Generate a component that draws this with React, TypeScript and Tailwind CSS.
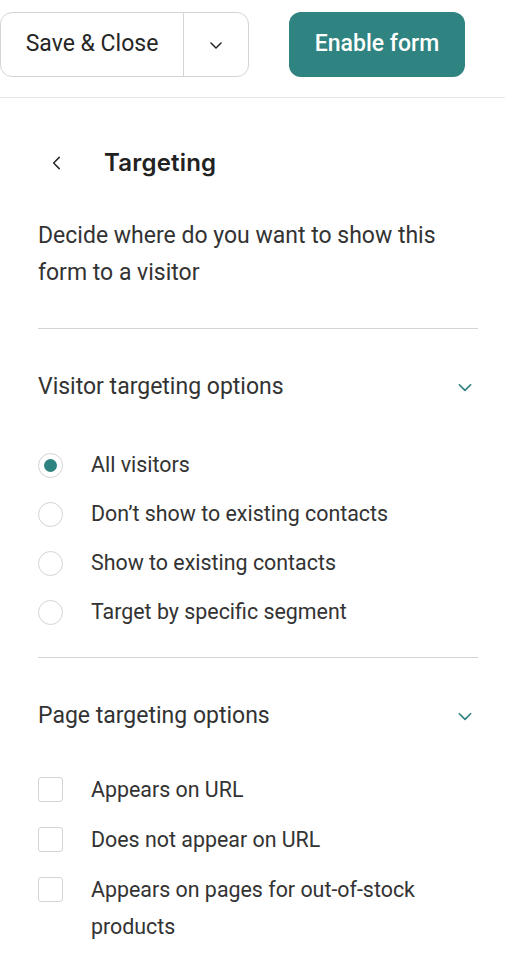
import React from "react";

const Chevron = ({ className = "", dir = "down", sw = 1.5 }: { className?: string; dir?: "down" | "left"; sw?: number }) => (
  <svg
    viewBox="0 0 16 16"
    className={className}
    fill="none"
    stroke="currentColor"
    strokeWidth={sw}
    strokeLinecap="round"
    strokeLinejoin="round"
  >
    {dir === "down" ? <path d="M3 6l5 5 5-5" /> : <path d="M10 3L5 8l5 5" />}
  </svg>
);

export default function App() {
  const radios = [
    "All visitors",
    "Don\u2019t show to existing contacts",
    "Show to existing contacts",
    "Target by specific segment",
  ];
  const checks = ["Appears on URL", "Does not appear on URL", "Appears on pages for out-of-stock products"];
  return (
    <div className="w-[505px] min-h-[969px] bg-white text-[#333333]" style={{ fontFamily: "Roboto, 'Liberation Sans', sans-serif" }}>
      <div className="flex items-center gap-10 pt-3 pb-5 border-b border-[#e6e6e6]">
        <div className="flex h-[65px] w-[249px] rounded-[12px] border border-[#d4d4d4]">
          <div className="flex w-[183px] items-center justify-center border-r border-[#d4d4d4] text-[23px] text-[#262626]">Save &amp; Close</div>
          <div className="flex flex-1 items-center justify-center">
            <Chevron className="w-[16px] h-[16px] text-[#262626]" />
          </div>
        </div>
        <div className="flex h-[65px] w-[176px] items-center justify-center rounded-[12px] bg-[#2f8380] text-[23px] font-medium text-white">
          Enable form
        </div>
      </div>

      <div className="pl-[38px] pr-[27px]">
        <div className="flex items-center h-[40px] mt-[45px]">
          <Chevron dir="left" sw={1.3} className="ml-[10px] w-[18px] h-[18px] text-[#262626]" />
          <span className="ml-[38px] text-[24px] font-semibold tracking-[0.2px] text-[#222222]" style={{ fontFamily: "Inter, sans-serif" }}>Targeting</span>
        </div>
        <p className="mt-[34px] text-[23px] leading-[37px] pr-[20px]">
          Decide where do you want to show this form to a visitor
        </p>
        <div className="mt-[37px] border-t border-[#d4d4d4]" />

        <div className="flex items-center justify-between h-[40px] mt-[38px]">
          <span className="text-[23px]">Visitor targeting options</span>
          <Chevron className="mr-[4px] w-[18px] h-[18px] text-[#2f8380]" />
        </div>
        <div className="mt-[46px] flex flex-col gap-[24px]">
          {radios.map((r, i) => (
            <div key={r} className="flex items-center h-[25px]">
              <div className="flex h-[25px] w-[25px] items-center justify-center rounded-full border border-[#d4d4d4]">
                {i === 0 && <div className="h-[13px] w-[13px] rounded-full bg-[#2f8380]" />}
              </div>
              <span className="ml-[28px] text-[21.4px]">{r}</span>
            </div>
          ))}
        </div>
        <div className="mt-[32px] border-t border-[#d4d4d4]" />

        <div className="flex items-center justify-between h-[40px] mt-[38px]">
          <span className="text-[23px]">Page targeting options</span>
          <Chevron className="mr-[4px] w-[18px] h-[18px] text-[#2f8380]" />
        </div>
        <div className="mt-[40px] flex flex-col gap-[18px]">
          {checks.map((c) => (
            <div key={c} className="flex items-start">
              <div className="mt-[1px] h-[25px] w-[25px] shrink-0 rounded-[3px] border border-[#d4d4d4]" />
              <span className="ml-[28px] text-[21.4px] leading-[37px] -mt-[5px] pr-[30px]">{c}</span>
            </div>
          ))}
        </div>
      </div>
    </div>
  );
}
